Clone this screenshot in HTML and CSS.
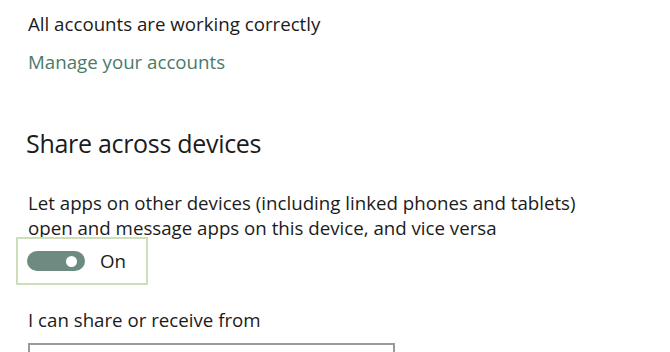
FILE: index.html
```html
<!DOCTYPE html>
<html>
<head>
<meta charset="utf-8">
<link rel="stylesheet" href="styles.css">
</head>
<body>
<main class="page">
  <p class="status">All accounts are working correctly</p>
  <a class="link" href="#">Manage your accounts</a>
  <h2 class="heading">Share across devices</h2>
  <p class="desc">Let apps on other devices (including linked phones and tablets)<br>open and message apps on this device, and vice versa</p>
  <div class="toggle-focus">
    <span class="toggle"><span class="knob"></span></span>
    <span class="toggle-label">On</span>
  </div>
  <p class="field-label">I can share or receive from</p>
  <div class="select"></div>
</main>
</body>
</html>
```
FILE: styles.css
```css
html, body {
  margin: 0;
  padding: 0;
  background: #ffffff;
  overflow: hidden;
}
.page {
  padding: 12px 0 0 28px;
  font-family: "Open Sans", "Noto Sans", sans-serif;
  color: #1b1b1b;
  font-size: 18.7px;
  display: flex;
  flex-direction: column;
  align-items: flex-start;
}
.status {
  margin: 0;
  line-height: 24px;
}
.link {
  margin-top: 14px;
  line-height: 24px;
  color: #4b7a69;
  text-decoration: none;
}
.heading {
  margin: 53px 0 0 -2px;
  font-size: 25px;
  font-weight: 400;
  line-height: 32px;
  letter-spacing: -0.3px;
}
.desc {
  margin: 31px 0 0 0;
  line-height: 25px;
}
.toggle-focus {
  margin: -3px 0 0 -12px;
  width: 119px;
  height: 44px;
  border: 2px solid #cddfb9;
  display: flex;
  align-items: center;
  padding-left: 9px;
  box-sizing: content-box;
}
.toggle {
  width: 58px;
  height: 20px;
  border-radius: 10px;
  background: #6d8b80;
  display: flex;
  align-items: center;
  justify-content: flex-end;
  padding-right: 8px;
  box-sizing: border-box;
}
.knob {
  width: 11px;
  height: 11px;
  border-radius: 50%;
  background: #ffffff;
}
.toggle-label {
  margin-left: 15px;
  line-height: 24px;
}
.field-label {
  margin: 23px 0 0 0;
  line-height: 24px;
}
.select {
  margin-top: 11px;
  width: 367px;
  height: 30px;
  border: 2px solid #9a9a9a;
  box-sizing: border-box;
}
```
